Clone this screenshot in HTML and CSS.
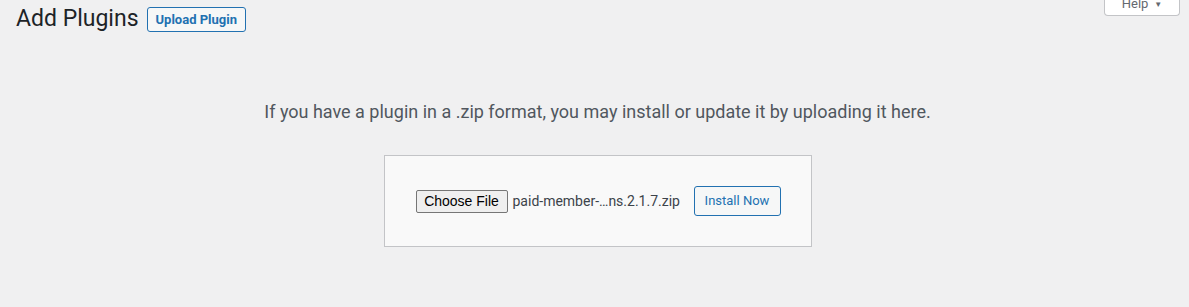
FILE: index.html
```html
<!DOCTYPE html>
<html>
<head>
    <title>Add Plugins</title>
    <link rel="stylesheet" href="styles.css">
</head>
<body>
    <div class="help-tab">
        <button class="help-button">Help <span class="help-arrow">&#9660;</span></button>
    </div>

    <div class="wrap">
        <div class="page-header">
            <h1 class="page-title">Add Plugins</h1>
            <a href="#" class="page-title-action">Upload Plugin</a>
        </div>

        <div class="upload-plugin">
            <p class="install-help">If you have a plugin in a .zip format, you may install or update it by uploading it here.</p>

            <form class="wp-upload-form">
                <div class="file-input">
                    <span class="file-button">Choose File</span>
                    <span class="file-name">paid-member-…ns.2.1.7.zip</span>
                </div>
                <button type="button" class="button">Install Now</button>
            </form>
        </div>
    </div>
</body>
</html>
```

FILE: styles.css
```css
body {
    margin: 0;
    background: #f0f0f1;
    color: #1d2327;
    font-family: Roboto, "Noto Sans", sans-serif;
}

.wrap {
    padding: 0 10px 0 16px;
}

.page-header {
    display: flex;
    align-items: center;
    gap: 8px;
    padding-top: 4px;
}

.page-title {
    margin: 0;
    font-size: 23px;
    font-weight: 400;
    line-height: 30px;
}

.page-title-action {
    display: inline-block;
    box-sizing: border-box;
    height: 25px;
    padding: 0 8px;
    border: 1px solid #2271b1;
    border-radius: 3px;
    background: #f6f7f7;
    color: #2271b1;
    font-size: 13px;
    font-weight: 700;
    line-height: 23px;
    text-decoration: none;
}

.help-tab {
    position: absolute;
    top: 0;
    right: 9px;
}

.help-button {
    display: flex;
    justify-content: center;
    align-items: flex-end;
    gap: 6px;
    box-sizing: border-box;
    width: 76px;
    height: 16px;
    padding: 0 0 5px;
    border: 1px solid #c3c4c7;
    border-top: none;
    border-radius: 0 0 4px 4px;
    background: #fff;
    color: #646970;
    font-family: Roboto, sans-serif;
    font-size: 13px;
    line-height: 1;
    overflow: hidden;
}

.help-arrow {
    font-size: 8px;
    line-height: 8px;
    margin-bottom: 1px;
}

.upload-plugin {
    text-align: center;
}

.install-help {
    margin: 66px 0 31px;
    color: #50575e;
    font-size: 18px;
    line-height: 24px;
}

.wp-upload-form {
    display: inline-flex;
    align-items: center;
    margin: 0;
    padding: 30px;
    border: 1px solid #c3c4c7;
    background: #f9f9f9;
}

.file-input {
    display: flex;
    align-items: center;
    margin-left: 1px;
}

.file-button {
    box-sizing: border-box;
    width: 92px;
    height: 23px;
    border: 1px solid #767676;
    border-radius: 2px;
    background: #efefef;
    color: #000;
    font-family: "Liberation Sans", Arial, sans-serif;
    font-size: 14px;
    line-height: 21px;
}

.file-name {
    width: 166px;
    margin-left: 5px;
    color: #3c434a;
    font-family: Roboto, sans-serif;
    font-size: 14px;
    text-align: left;
    white-space: nowrap;
}

.button {
    box-sizing: border-box;
    width: 87px;
    height: 30px;
    margin-left: 15px;
    padding: 0 10px;
    border: 1px solid #2271b1;
    border-radius: 3px;
    background: #f6f7f7;
    color: #2271b1;
    font-family: Roboto, sans-serif;
    font-size: 13px;
    line-height: 28px;
}
```
